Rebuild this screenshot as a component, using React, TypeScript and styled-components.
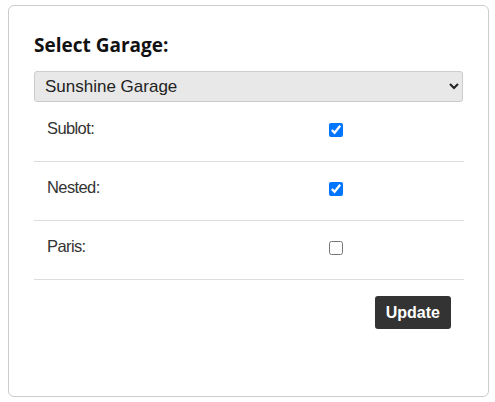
import React, { useState } from "react";
import styled, { createGlobalStyle } from "styled-components";

const GlobalStyle = createGlobalStyle`
  html, body { margin: 0; padding: 0; background: #fff; }
  body { font-family: "Liberation Sans", Arial, sans-serif; }
`;

const Page = styled.div`
  padding: 5px 6px 5px 8px;
`;

const Card = styled.div`
  box-sizing: border-box;
  width: 481px;
  height: 392px;
  border: 1px solid #cccccc;
  border-radius: 6px;
  padding: 27px 24px 0 25px;
  display: flex;
  flex-direction: column;
`;

const Title = styled.h2`
  margin: 0 0 13px 0;
  font-family: "Open Sans", sans-serif;
  font-weight: 700;
  font-size: 19px;
  line-height: 25px;
  color: #111;
`;

const Select = styled.select`
  box-sizing: border-box;
  width: 429px;
  height: 31px;
  margin-bottom: 1px;
  padding: 0 6px;
  border: 1px solid #cccccc;
  border-radius: 3px;
  background: #e8e8e8;
  font-family: "Liberation Sans", Arial, sans-serif;
  font-size: 17px;
  color: #222;
  outline: none;
`;

const Row = styled.div`
  box-sizing: border-box;
  height: 59px;
  display: grid;
  grid-template-columns: 295px 1fr;
  align-items: start;
  border-bottom: 1px solid #dddddd;
`;

const Label = styled.span`
  padding: 16px 0 0 13px;
  font-size: 16.5px;
  letter-spacing: -0.6px;
  line-height: 18px;
  color: #333;
`;

const Check = styled.input`
  width: 14px;
  height: 14px;
  margin: 20px 0 0 0;
  accent-color: #0075ff;
`;

const Footer = styled.div`
  display: flex;
  justify-content: flex-end;
  padding: 16px 13px 0 0;
`;

const Button = styled.button`
  box-sizing: border-box;
  height: 33px;
  padding: 0 11px;
  border: none;
  border-radius: 3px;
  background: #333333;
  color: #fff;
  font-family: "Liberation Sans", Arial, sans-serif;
  font-weight: 700;
  font-size: 16px;
  cursor: pointer;
`;

const options = [
  { key: "sublot", label: "Sublot:", value: true },
  { key: "nested", label: "Nested:", value: true },
  { key: "paris", label: "Paris:", value: false },
];

export default function App() {
  const [vals, setVals] = useState<Record<string, boolean>>(
    Object.fromEntries(options.map((o) => [o.key, o.value]))
  );
  return (
    <>
      <GlobalStyle />
      <Page>
        <Card>
          <Title>Select Garage:</Title>
          <Select defaultValue="sunshine">
            <option value="sunshine">Sunshine Garage</option>
          </Select>
          {options.map((o) => (
            <Row key={o.key}>
              <Label>{o.label}</Label>
              <Check
                type="checkbox"
                checked={vals[o.key]}
                onChange={(e) => setVals({ ...vals, [o.key]: e.target.checked })}
              />
            </Row>
          ))}
          <Footer>
            <Button>Update</Button>
          </Footer>
        </Card>
      </Page>
    </>
  );
}
